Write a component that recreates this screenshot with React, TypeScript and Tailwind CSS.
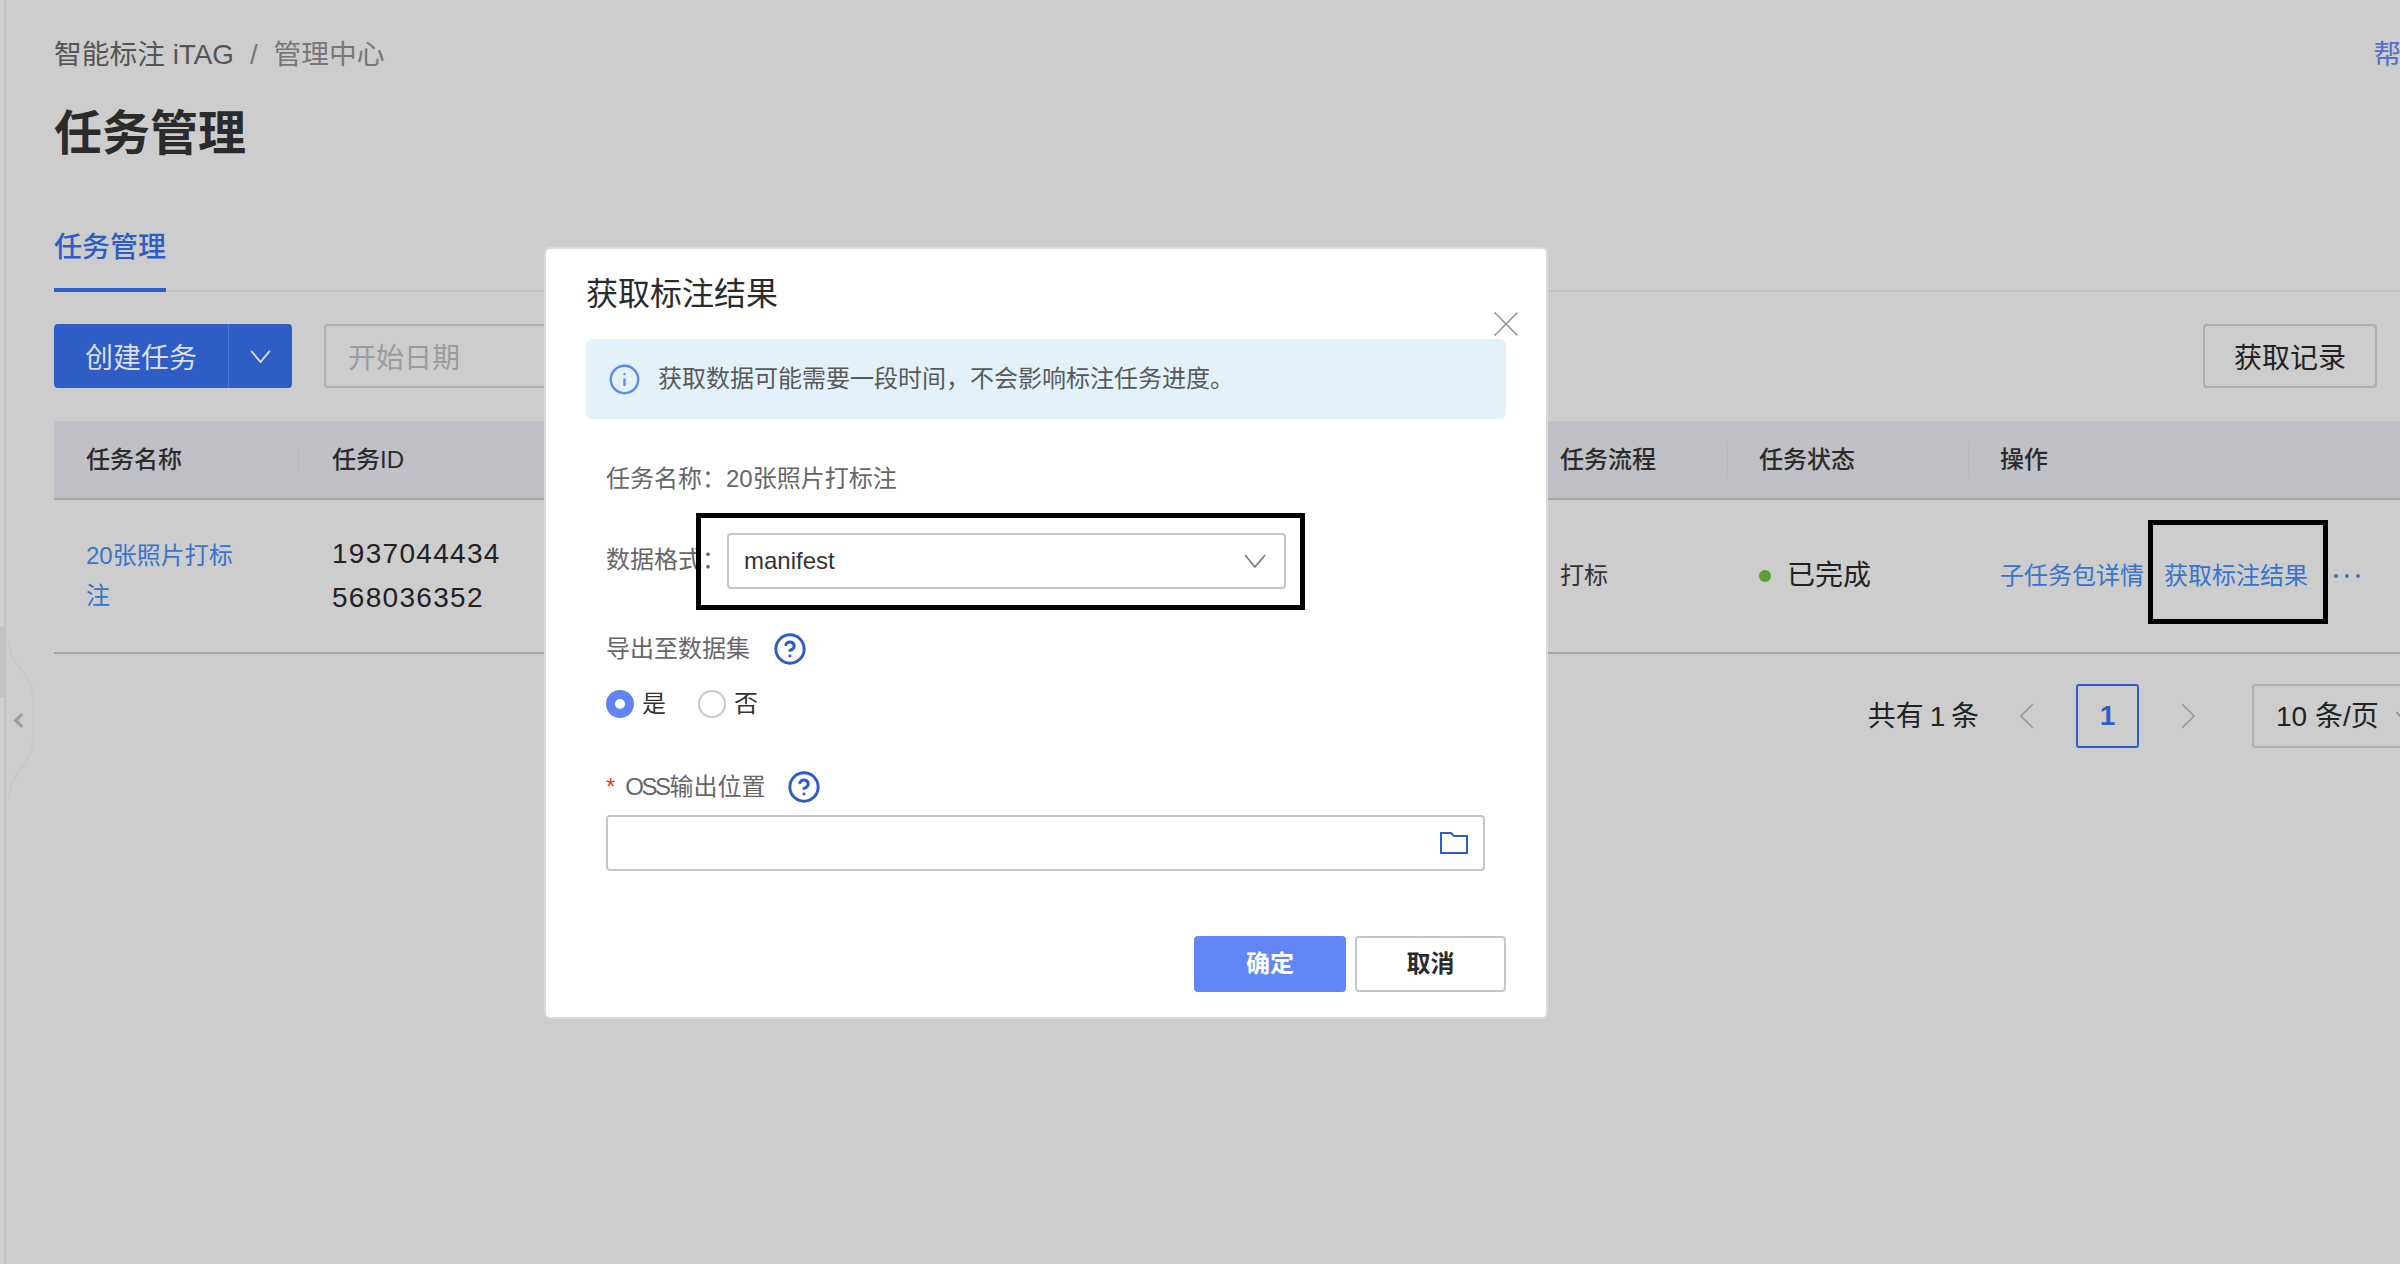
import { CircleHelp, Info } from "lucide-react";

const FONT = "font-['Liberation_Sans','Noto_Sans_CJK_SC',sans-serif]";

function Chevron({ dir, className, weight = 1.6 }: { dir: "down" | "left" | "right"; className: string; weight?: number }) {
  const pts = dir === "down" ? "1,1 11,13 21,1" : dir === "left" ? "13,1 1,13 13,25" : "1,1 13,13 1,25";
  const box = dir === "down" ? "0 0 22 14" : "0 0 14 26";
  return (
    <svg viewBox={box} className={className} fill="none" stroke="currentColor" strokeWidth={weight}>
      <polyline points={pts} />
    </svg>
  );
}

function HelpIcon() {
  return <CircleHelp size={34} strokeWidth={2.1} className="text-[#2d5dc5]" />;
}

function Radio({ checked, label }: { checked?: boolean; label: string }) {
  return (
    <div className="flex items-center gap-[8px]">
      {checked ? (
        <span className="w-[28px] h-[28px] rounded-full bg-[#6285f5] flex items-center justify-center">
          <span className="w-[10px] h-[10px] rounded-full bg-white" />
        </span>
      ) : (
        <span className="w-[28px] h-[28px] rounded-full border-2 border-[#c6c8ce] bg-white" />
      )}
      <span className="text-[24px] leading-[36px] text-[#333]">{label}</span>
    </div>
  );
}

function ResultDialog() {
  return (
    <div className="absolute left-[546px] top-[249px] w-[1000px] h-[768px] bg-white rounded-[4px] shadow-[0_0_0_2px_#d9d9de] px-[40px] pt-[23px]">
      <div className="text-[32px] leading-[44px] text-[#2b2b2b]">获取标注结果</div>
      <svg viewBox="0 0 24 24" className="absolute left-[948px] top-[63px] w-[24px] h-[24px] text-[#8f8f8f]" stroke="currentColor" strokeWidth="1.5">
        <line x1="0.5" y1="0.5" x2="23.5" y2="23.5" />
        <line x1="23.5" y1="0.5" x2="0.5" y2="23.5" />
      </svg>

      <div className="mt-[23px] h-[80px] rounded-[6px] bg-[#e3f1fb] flex items-center pl-[22px]">
        <Info size={33} strokeWidth={1.75} className="text-[#5f8af5]" />
        <span className="ml-[17px] text-[24px] leading-[36px] text-[#595959]">获取数据可能需要一段时间，不会影响标注任务进度。</span>
      </div>

      <div className="pl-[20px] pr-[21px]">
        <div className="mt-[42px] text-[24px] leading-[36px] text-[#666]">任务名称：20张照片打标注</div>

        <div className="mt-[36px] flex items-center">
          <span className="w-[121px] pb-[2px] text-[24px] leading-[36px] text-[#666]">数据格式：</span>
          <div className="w-[559px] h-[56px] border-2 border-[#c3c6cd] rounded-[4px] flex items-center justify-between pl-[15px] pr-[18px]">
            <span className="text-[24px] text-[#333]">manifest</span>
            <Chevron dir="down" className="w-[22px] h-[14px] text-[#777]" />
          </div>
        </div>

        <div className="mt-[42px] flex items-center gap-[23px]">
          <span className="text-[24px] leading-[36px] text-[#666]">导出至数据集</span>
          <HelpIcon />
        </div>

        <div className="mt-[19px] flex gap-[32px]">
          <Radio checked label="是" />
          <Radio label="否" />
        </div>

        <div className="mt-[47px] flex items-center">
          <span className="text-[24px] leading-[36px] text-[#f5391c] mr-[10px]">*</span>
          <span className="text-[24px] leading-[36px] text-[#666]"><span className="tracking-[-2.5px] mr-[1px]">OSS</span>输出位置</span>
          <span className="ml-[21px]"><HelpIcon /></span>
        </div>

        <div className="mt-[10px] h-[56px] border-2 border-[#c3c6cd] rounded-[4px] flex items-center justify-end pr-[15px]">
          <svg viewBox="0 0 28 22" className="w-[28px] h-[22px] text-[#2d5dc5]" fill="none" stroke="currentColor" strokeWidth="2">
            <path d="M1 1h10l3 3h13v17H1z" />
          </svg>
        </div>
      </div>

      <div className="mt-[65px] flex justify-end gap-[9px]">
        <button className="w-[152px] h-[56px] rounded-[4px] bg-[#6286f6] text-white text-[24px] font-bold">确定</button>
        <button className="w-[151px] h-[56px] rounded-[4px] border-2 border-[#c3c6cd] text-[#2b2b2b] text-[24px] font-bold">取消</button>
      </div>

      <div className="absolute left-[150px] top-[264px] w-[609px] h-[97px] border-[5px] border-black" />
    </div>
  );
}

export default function App() {
  return (
    <div className={`${FONT} relative w-[2400px] h-[1264px] overflow-hidden bg-[#cdcdcd] flex`}>
      <div className="relative w-[6px] shrink-0 border-r-2 border-[#c2c2c2] bg-[#cfcfcf]">
        <div className="absolute left-0 top-[627px] w-[4px] h-[70px] bg-[#c2c3c7]" />
      </div>
      <svg viewBox="0 0 28 158" className="absolute left-[7px] top-[640px] w-[28px] h-[158px] text-[#c3c7c5]" fill="none" stroke="currentColor" strokeWidth="1.5">
        <path d="M2 0C2 26 26 34 26 58V100C26 124 2 132 2 158" />
      </svg>
      <svg viewBox="0 0 12 16" className="absolute left-[13px] top-[713px] w-[11px] h-[15px] text-[#9d9d9d]" fill="none" stroke="currentColor" strokeWidth="3.5">
        <polyline points="10,1 3,8 10,15" />
      </svg>

      <main className="flex-1 min-w-0 pl-[48px] pt-[35px] flex flex-col">
        <div className="flex justify-between h-[40px] items-center text-[27.75px] leading-[40px]">
          <div className="flex items-center text-[#555]">
            <span>智能标注 iTAG</span>
            <span className="mx-[16px] text-[#777]">/</span>
            <span className="text-[#777]">管理中心</span>
          </div>
          <span className="text-[#5470c8] whitespace-nowrap -mr-[29px]">帮助</span>
        </div>

        <h1 className="mt-[29px] text-[48px] leading-[60px] font-bold text-[#2b2b2b]">任务管理</h1>

        <div className="mt-[64px] h-[64px] border-b-2 border-[#c3c3c3]">
          <div className="inline-block h-[64px] border-b-4 border-[#2d5dc5] text-[28px] leading-[40px] font-medium text-[#2d5dc5]">任务管理</div>
        </div>

        <div className="mt-[32px] h-[64px] flex justify-between pr-[23px]">
          <div className="flex">
            <div className="w-[238px] h-[64px] rounded-[4px] bg-[#2d5dc5] text-[#d9dee9] flex">
              <span className="w-[175px] pt-[5px] border-r border-[#4f77cf] text-[28px] flex items-center justify-center">创建任务</span>
              <span className="flex-1 flex items-center justify-center">
                <Chevron dir="down" className="w-[21px] h-[13px]" weight={2} />
              </span>
            </div>
            <div className="ml-[32px] w-[300px] h-[64px] pt-[5px] rounded-[4px] border-2 border-[#b0b0b0] text-[28px] text-[#9b9b9b] flex items-center pl-[22px]">开始日期</div>
          </div>
          <button className="w-[174px] h-[64px] pt-[5px] rounded-[4px] border-2 border-[#adadad] text-[28px] text-[#222]">获取记录</button>
        </div>

        <div className="mt-[33px]">
          <div className="grid grid-cols-[244px_1230px_199px_241px_1fr] h-[79px] bg-[#bfc1c6] border-b-2 border-[#a5a5a5] items-center text-[24px] font-medium text-[#2b2b2b]">
            <span className="pl-[32px]">任务名称</span>
            <span className="pl-[33px] border-l border-[#b8babf]">任务ID</span>
            <span className="pl-[32px]">任务流程</span>
            <span className="pl-[31px] border-l border-[#b8babf]">任务状态</span>
            <span className="pl-[31px] border-l border-[#b8babf]">操作</span>
          </div>
          <div className="grid grid-cols-[244px_1230px_199px_241px_1fr] h-[154px] border-b-2 border-[#a5a5a5] items-center">
            <div className="pl-[32px] pr-[60px] text-[24px] leading-[40px] text-[#3873cc]">20张照片打标注</div>
            <div className="pl-[34px] text-[28px] tracking-[1.3px] leading-[44px] text-[#222]">1937044434<br />568036352</div>
            <div className="pl-[32px] text-[24px] text-[#333]">打标</div>
            <div className="pl-[32px] flex items-center">
              <span className="w-[12px] h-[12px] rounded-full bg-[#5a9e2f]" />
              <span className="ml-[16px] text-[28px] text-[#222]">已完成</span>
            </div>
            <div className="pl-[32px] flex items-center text-[24px] text-[#3873cc] whitespace-nowrap">
              <span>子任务包详情</span>
              <span className="ml-[20px]">获取标注结果</span>
              <span className="ml-[26px] flex gap-[7px]">
                <span className="w-[4px] h-[4px] rounded-full bg-[#3873cc]" />
                <span className="w-[4px] h-[4px] rounded-full bg-[#3873cc]" />
                <span className="w-[4px] h-[4px] rounded-full bg-[#3873cc]" />
              </span>
            </div>
          </div>
        </div>

        <div className="mt-[30px] h-[64px] flex items-center justify-end text-[28px] text-[#222]">
          <span className="pt-[2px] [word-spacing:-2px]">共有 1 条</span>
          <Chevron dir="left" className="ml-[41px] w-[14px] h-[26px] text-[#9a9a9a]" />
          <span className="ml-[42px] w-[63px] h-[64px] rounded-[3px] border-2 border-[#2d5dc5] text-[#2d5dc5] font-bold flex items-center justify-center">1</span>
          <Chevron dir="right" className="ml-[42px] w-[14px] h-[26px] text-[#9a9a9a]" />
          <div className="ml-[57px] -mr-[22px] w-[170px] h-[64px] pt-[2px] rounded-[3px] border-2 border-[#b0b0b0] flex items-center pl-[22px] whitespace-nowrap">
            10 条/页
            <Chevron dir="down" className="ml-[16px] w-[20px] h-[12px] text-[#8a8a8a]" />
          </div>
        </div>
      </main>

      <div className="absolute left-[2148px] top-[520px] w-[180px] h-[104px] border-[5px] border-black" />
      <ResultDialog />
    </div>
  );
}
